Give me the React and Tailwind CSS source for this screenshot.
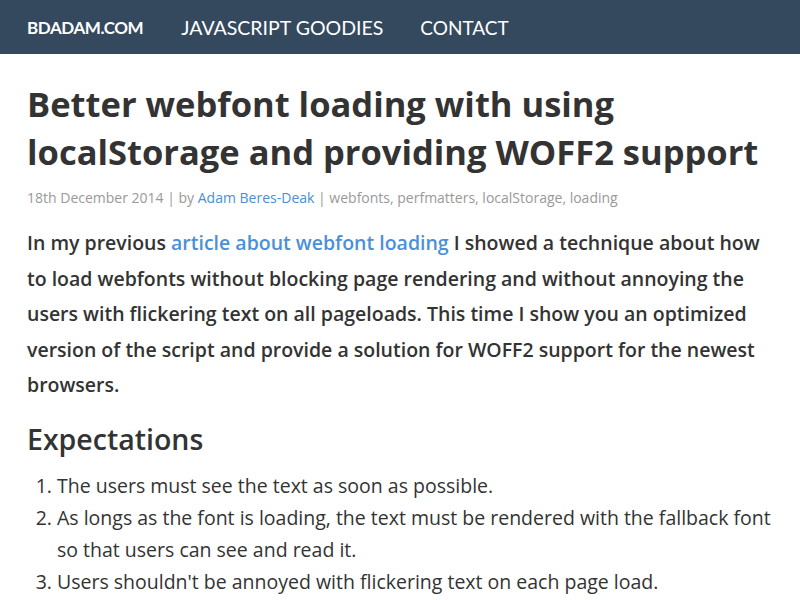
export default function App() {
    return (
        <div className="min-h-[600px] bg-white text-[#333]" style={{ fontFamily: "'Open Sans', Lato, sans-serif" }}>
            <nav className="h-[54px] bg-[#34495e] flex items-center px-[27px] pt-[2px] text-white" style={{ fontFamily: "Lato, sans-serif" }}>
                <a className="text-[17px] font-bold mr-[38px] tracking-tight">BDADAM.COM</a>
                <a className="text-[19.5px] mr-[37px]">JAVASCRIPT GOODIES</a>
                <a className="text-[19px]">CONTACT</a>
            </nav>
            <main className="w-[800px] px-[27px] pt-[26px]">
                <h1 className="text-[34.5px] font-bold leading-[48px]">
                    Better webfont loading with using localStorage and providing WOFF2 support
                </h1>
                <p className="text-[14px] text-[#999] mt-[11px]">
                    18th December 2014 | by <a className="text-[#4a8fd0]">Adam Beres-Deak</a> | webfonts, perfmatters,
                    localStorage, loading
                </p>
                <p className="text-[19.5px] font-semibold leading-[35.5px] mt-[17px]">
                    In my previous <a className="text-[#4a90d9]">article about webfont loading</a> I showed a technique
                    about how to load webfonts without blocking page rendering and without annoying the users with
                    flickering text on all pageloads. This time I show you an optimized version of the script and
                    provide a solution for WOFF2 support for the newest browsers.
                </p>
                <h2 className="text-[28.5px] font-semibold mt-[15px]">Expectations</h2>
                <ol className="list-decimal pl-[30px] text-[19.5px] leading-[32px] mt-[10px]">
                    <li>The users must see the text as soon as possible.</li>
                    <li>
                        As longs as the font is loading, the text must be rendered with the fallback font so that users
                        can see and read it.
                    </li>
                    <li>Users shouldn't be annoyed with flickering text on each page load.</li>
                </ol>
            </main>
        </div>
    )
}
